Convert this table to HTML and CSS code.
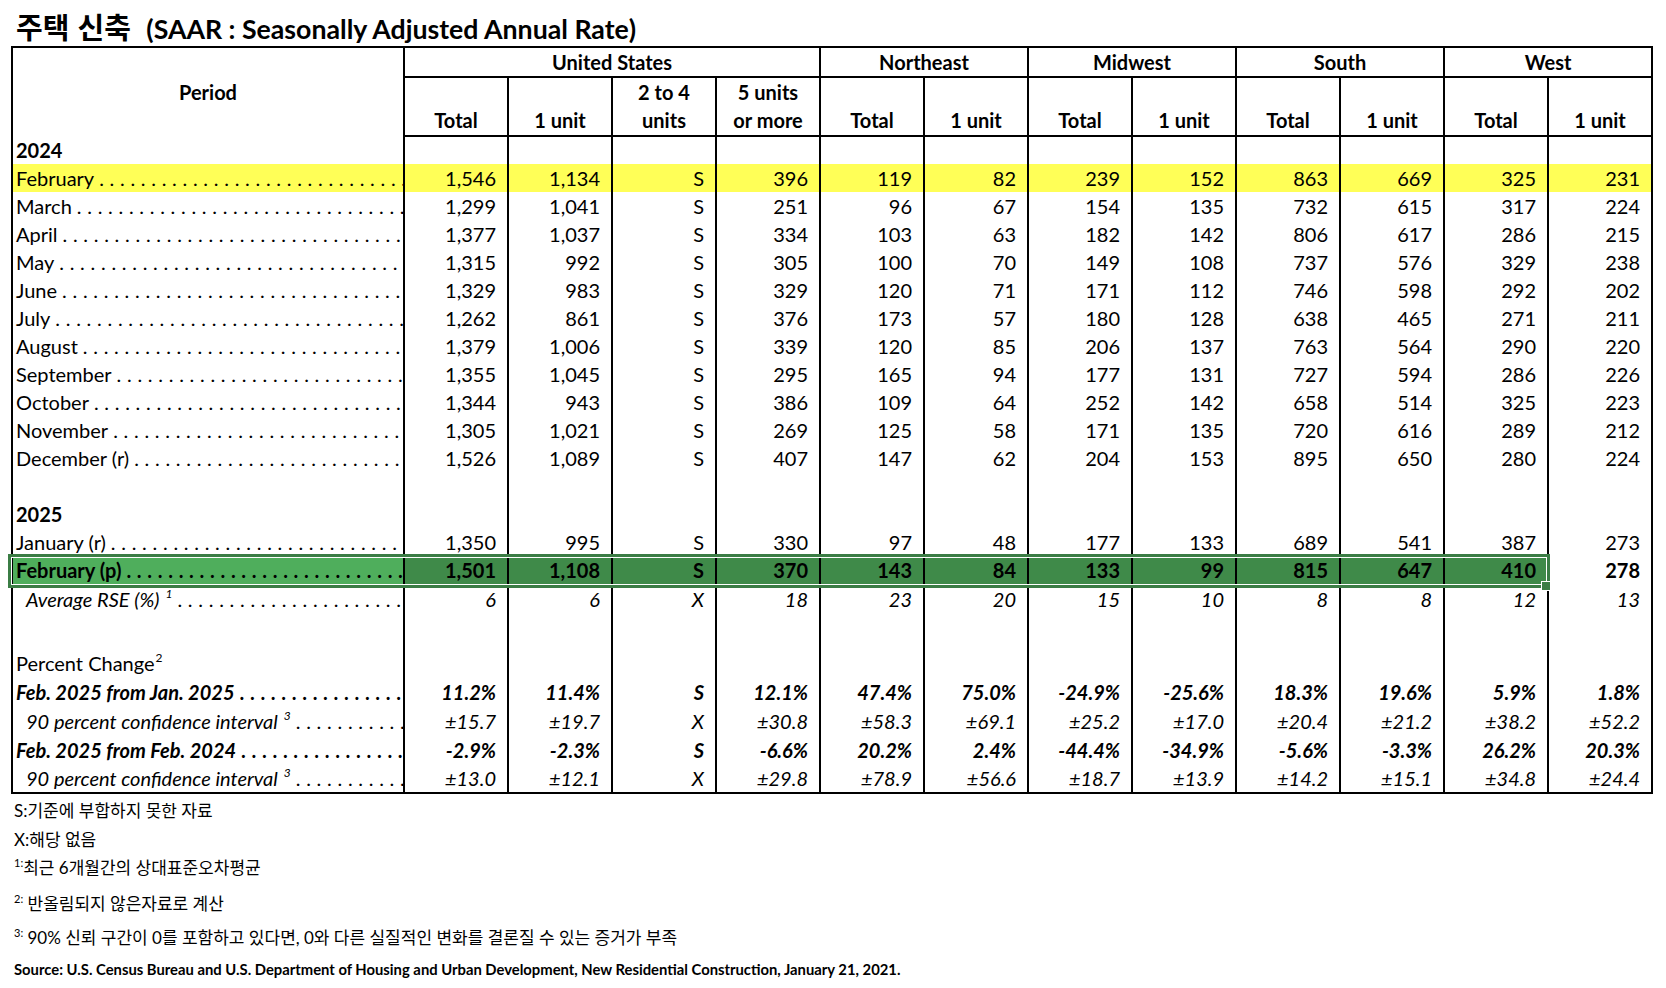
FILE: index.html
```html
<!DOCTYPE html>
<html lang="ko">
<head>
<meta charset="utf-8">
<title>주택 신축</title>
<link rel="stylesheet" href="styles.css">
</head>
<body>
<div class="page">
  <h1 class="title"><span class="ko">주택 신축</span> (SAAR : Seasonally Adjusted Annual Rate)</h1>
  <div class="sheet">
    <table class="grid">
      <colgroup><col class="c-period"><col class="c-num" span="12"></colgroup>
      <thead>
        <tr class="h1">
          <th rowspan="2" class="period-h">Period</th>
          <th colspan="4" class="grp">United States</th>
          <th colspan="2" class="grp">Northeast</th>
          <th colspan="2" class="grp">Midwest</th>
          <th colspan="2" class="grp">South</th>
          <th colspan="2" class="grp">West</th>
        </tr>
        <tr class="h2">
          <th>Total</th><th>1 unit</th><th>2 to 4<br>units</th><th>5 units<br>or more</th>
          <th>Total</th><th>1 unit</th><th>Total</th><th>1 unit</th>
          <th>Total</th><th>1 unit</th><th>Total</th><th>1 unit</th>
        </tr>
      </thead>
      <tbody>
        <tr class="year"><td class="p">2024</td><td></td><td></td><td></td><td></td><td></td><td></td><td></td><td></td><td></td><td></td><td></td><td></td></tr>
        <tr class="yellow"><td class="p"><div class="lbl"><span>February</span></div></td><td>1,546</td><td>1,134</td><td>S</td><td>396</td><td>119</td><td>82</td><td>239</td><td>152</td><td>863</td><td>669</td><td>325</td><td>231</td></tr>
        <tr><td class="p"><div class="lbl"><span>March</span></div></td><td>1,299</td><td>1,041</td><td>S</td><td>251</td><td>96</td><td>67</td><td>154</td><td>135</td><td>732</td><td>615</td><td>317</td><td>224</td></tr>
        <tr><td class="p"><div class="lbl"><span>April</span></div></td><td>1,377</td><td>1,037</td><td>S</td><td>334</td><td>103</td><td>63</td><td>182</td><td>142</td><td>806</td><td>617</td><td>286</td><td>215</td></tr>
        <tr><td class="p"><div class="lbl"><span>May</span></div></td><td>1,315</td><td>992</td><td>S</td><td>305</td><td>100</td><td>70</td><td>149</td><td>108</td><td>737</td><td>576</td><td>329</td><td>238</td></tr>
        <tr><td class="p"><div class="lbl"><span>June</span></div></td><td>1,329</td><td>983</td><td>S</td><td>329</td><td>120</td><td>71</td><td>171</td><td>112</td><td>746</td><td>598</td><td>292</td><td>202</td></tr>
        <tr><td class="p"><div class="lbl"><span>July</span></div></td><td>1,262</td><td>861</td><td>S</td><td>376</td><td>173</td><td>57</td><td>180</td><td>128</td><td>638</td><td>465</td><td>271</td><td>211</td></tr>
        <tr><td class="p"><div class="lbl"><span>August</span></div></td><td>1,379</td><td>1,006</td><td>S</td><td>339</td><td>120</td><td>85</td><td>206</td><td>137</td><td>763</td><td>564</td><td>290</td><td>220</td></tr>
        <tr><td class="p"><div class="lbl"><span>September</span></div></td><td>1,355</td><td>1,045</td><td>S</td><td>295</td><td>165</td><td>94</td><td>177</td><td>131</td><td>727</td><td>594</td><td>286</td><td>226</td></tr>
        <tr><td class="p"><div class="lbl"><span>October</span></div></td><td>1,344</td><td>943</td><td>S</td><td>386</td><td>109</td><td>64</td><td>252</td><td>142</td><td>658</td><td>514</td><td>325</td><td>223</td></tr>
        <tr><td class="p"><div class="lbl"><span>November</span></div></td><td>1,305</td><td>1,021</td><td>S</td><td>269</td><td>125</td><td>58</td><td>171</td><td>135</td><td>720</td><td>616</td><td>289</td><td>212</td></tr>
        <tr><td class="p"><div class="lbl"><span>December (r)</span></div></td><td>1,526</td><td>1,089</td><td>S</td><td>407</td><td>147</td><td>62</td><td>204</td><td>153</td><td>895</td><td>650</td><td>280</td><td>224</td></tr>
        <tr class="blank"><td class="p"></td><td></td><td></td><td></td><td></td><td></td><td></td><td></td><td></td><td></td><td></td><td></td><td></td></tr>
        <tr class="year"><td class="p">2025</td><td></td><td></td><td></td><td></td><td></td><td></td><td></td><td></td><td></td><td></td><td></td><td></td></tr>
        <tr><td class="p"><div class="lbl"><span>January (r)</span></div></td><td>1,350</td><td>995</td><td>S</td><td>330</td><td>97</td><td>48</td><td>177</td><td>133</td><td>689</td><td>541</td><td>387</td><td>273</td></tr>
        <tr class="green"><td class="p"><div class="lbl"><span>February (p)</span></div></td><td>1,501</td><td>1,108</td><td>S</td><td>370</td><td>143</td><td>84</td><td>133</td><td>99</td><td>815</td><td>647</td><td>410</td><td class="plain">278</td></tr>
        <tr class="it"><td class="p ind"><div class="lbl"><span>Average RSE (%)<sup class="fn-mark">1</sup></span></div></td><td>6</td><td>6</td><td>X</td><td>18</td><td>23</td><td>20</td><td>15</td><td>10</td><td>8</td><td>8</td><td>12</td><td>13</td></tr>
        <tr class="blank"><td class="p"></td><td></td><td></td><td></td><td></td><td></td><td></td><td></td><td></td><td></td><td></td><td></td><td></td></tr>
        <tr class="pc"><td class="p">Percent Change<sup class="fn-mark tight">2</sup></td><td></td><td></td><td></td><td></td><td></td><td></td><td></td><td></td><td></td><td></td><td></td><td></td></tr>
        <tr class="bi"><td class="p"><div class="lbl"><span>Feb. 2025 from Jan. 2025</span></div></td><td>11.2%</td><td>11.4%</td><td>S</td><td>12.1%</td><td>47.4%</td><td>75.0%</td><td>-24.9%</td><td>-25.6%</td><td>18.3%</td><td>19.6%</td><td>5.9%</td><td>1.8%</td></tr>
        <tr class="it"><td class="p ind"><div class="lbl"><span>90 percent confidence interval<sup class="fn-mark">3</sup></span></div></td><td>±15.7</td><td>±19.7</td><td>X</td><td>±30.8</td><td>±58.3</td><td>±69.1</td><td>±25.2</td><td>±17.0</td><td>±20.4</td><td>±21.2</td><td>±38.2</td><td>±52.2</td></tr>
        <tr class="bi"><td class="p"><div class="lbl"><span>Feb. 2025 from Feb. 2024</span></div></td><td>-2.9%</td><td>-2.3%</td><td>S</td><td>-6.6%</td><td>20.2%</td><td>2.4%</td><td>-44.4%</td><td>-34.9%</td><td>-5.6%</td><td>-3.3%</td><td>26.2%</td><td>20.3%</td></tr>
        <tr class="it"><td class="p ind"><div class="lbl"><span>90 percent confidence interval<sup class="fn-mark">3</sup></span></div></td><td>±13.0</td><td>±12.1</td><td>X</td><td>±29.8</td><td>±78.9</td><td>±56.6</td><td>±18.7</td><td>±13.9</td><td>±14.2</td><td>±15.1</td><td>±34.8</td><td>±24.4</td></tr>
      </tbody>
    </table>
    <div class="sel-frame"></div>
    <div class="sel-handle"></div>
  </div>
  <div class="notes">
    <p class="fn first">S:기준에 부합하지 못한 자료</p>
    <p class="fn">X:해당 없음</p>
    <p class="fn"><sup>1:</sup>최근 6개월간의 상대표준오차평균</p>
    <p class="fn gap1"><sup>2:</sup> 반올림되지 않은자료로 계산</p>
    <p class="fn gap2"><sup>3:</sup> 90% 신뢰 구간이 0를 포함하고 있다면, 0와 다른 실질적인 변화를 결론질 수 있는 증거가 부족</p>
    <p class="source">Source: U.S. Census Bureau and U.S. Department of Housing and Urban Development, New Residential Construction, January 21, 2021.</p>
  </div>
</div>
</body>
</html>
```

FILE: styles.css
```css
* { box-sizing: border-box; }

html, body {
  margin: 0;
  padding: 0;
  background: #ffffff;
  color: #000000;
  font-family: Lato, "Noto Sans CJK KR", sans-serif;
}

.page {
  width: 1666px;
  height: 988px;
  overflow: hidden;
}

.title {
  margin: 0;
  height: 46px;
  padding: 8px 0 0 16px;
  font-size: 26.7px;
  line-height: 36px;
  font-weight: 700;
  white-space: nowrap;
}

.title .ko {
  font-family: "Noto Sans CJK KR", sans-serif;
  font-size: 29px;
  margin-right: 9px;
}

.sheet {
  position: relative;
  margin-left: 11px;
  width: 1640px;
}

.grid {
  border-collapse: collapse;
  table-layout: fixed;
  width: 1640px;
  font-size: 20px;
  border: 2px solid #000;
}

.grid col.c-period { width: 392px; }
.grid col.c-num { width: 104px; }

.grid th,
.grid td {
  padding: 0;
  border: 0 solid #000;
  white-space: nowrap;
  overflow: hidden;
}

/* header */
.grid th {
  font-weight: 700;
  text-align: center;
  border-left: 2px solid #000;
}

.grid tr.h1 { height: 30px; }
.grid tr.h2 { height: 59px; }

.h1 th { line-height: 26px; vertical-align: middle; }
.h1 .grp { border-bottom: 2px solid #000; }
.period-h { border-bottom: 2px solid #000; }

.h2 th {
  line-height: 28px;
  vertical-align: bottom;
  padding-bottom: 1px;
  border-bottom: 2px solid #000;
}

/* body */
.grid td {
  height: 28px;
  line-height: 24px;
  vertical-align: middle;
  text-align: right;
  padding-right: 11px;
  border-left: 2px solid #000;
}

.grid td.p {
  text-align: left;
  padding: 0 0 0 3px;
}

.grid td.p.ind { padding-left: 13px; }

.lbl {
  display: flex;
  align-items: baseline;
  white-space: nowrap;
}

.lbl::after {
  content: "......................................................................";
  flex: 1 1 0;
  min-width: 0;
  overflow: hidden;
  letter-spacing: 5.7px;
  margin-left: 5px;
  font-style: normal;
}

.year td.p { font-weight: 700; }

.yellow td { background: #ffff57; }

.green td { background: #3f8a49; font-weight: 700; }
.green td.p { background: #4fae5c; }
.green td.plain { background: #ffffff; }

.it td { font-style: italic; }
.bi td { font-style: italic; font-weight: 700; }
.it td, .bi td { height: 29px; }

.pc td { height: 36px; vertical-align: bottom; line-height: 28px; padding-bottom: 2px; }

.fn-mark {
  font-size: 12px;
  line-height: 0;
  vertical-align: 9px;
  margin-left: 6px;
  font-style: italic;
}

.fn-mark.tight { margin-left: 1px; font-style: normal; }

/* selection overlay */
.sel-frame {
  position: absolute;
  left: -3px;
  top: 508px;
  width: 1542px;
  height: 34px;
  border: 3px solid #3b7d45;
  box-shadow: inset 0 0 0 1px #ffffff;
  pointer-events: none;
}

.sel-handle {
  position: absolute;
  left: 1530px;
  top: 535px;
  width: 10px;
  height: 10px;
  background: #3b7d45;
  border: 1px solid #ffffff;
}

/* notes */
.notes {
  padding: 3px 0 0 14px;
}

.fn {
  margin: 0;
  height: 28px;
  font-size: 17px;
  line-height: 28px;
  white-space: nowrap;
}

.fn.first { height: 29px; }

.fn sup {
  font-size: 11px;
  line-height: 0;
  vertical-align: 7px;
}

.fn.gap1 { margin-top: 8px; }
.fn.gap2 { margin-top: 6px; }

.source {
  margin: 3px 0 0 0;
  font-size: 14.8px;
  line-height: 28px;
  font-weight: 700;
  white-space: nowrap;
}
```
